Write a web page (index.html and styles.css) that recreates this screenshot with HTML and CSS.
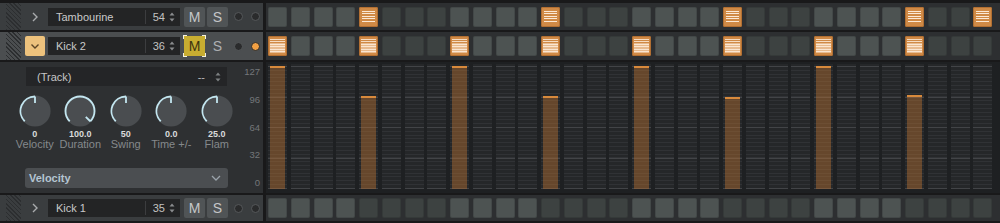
FILE: index.html
```html
<!DOCTYPE html>
<html>
<head>
<meta charset="utf-8">
<link rel="stylesheet" href="styles.css">
</head>
<body>
<div class="app">
  <div class="track">
    <div class="head">
      <div class="grip"></div>
      <div class="expander"><svg width="10" height="10" viewBox="0 0 10 10"><polyline points="3,1 7,5 3,9" fill="none" stroke="#a9abad" stroke-width="1.4"/></svg></div>
      <div class="namebox"><span class="name">Tambourine</span><span class="num">54</span><svg class="spin" width="6" height="12" viewBox="0 0 6 12"><path d="M0.5 4.5 L3 1.5 L5.5 4.5Z M0.5 7.5 L3 10.5 L5.5 7.5Z" fill="#8a8c8e"/></svg></div>
      <div class="btn">M</div>
      <div class="btn">S</div>
      <div class="dot"></div>
      <div class="dot"></div>
    </div>
    <div class="gutter"></div>
    <div class="steps">
      <div class="cell l"></div><div class="cell l"></div><div class="cell l"></div><div class="cell l"></div>
      <div class="cell on"><span class="stripes"></span></div><div class="cell d"></div><div class="cell d"></div><div class="cell d"></div>
      <div class="cell l"></div><div class="cell l"></div><div class="cell l"></div><div class="cell l"></div>
      <div class="cell on"><span class="stripes"></span></div><div class="cell d"></div><div class="cell d"></div><div class="cell d"></div>
      <div class="cell l"></div><div class="cell l"></div><div class="cell l"></div><div class="cell l"></div>
      <div class="cell on"><span class="stripes"></span></div><div class="cell d"></div><div class="cell d"></div><div class="cell d"></div>
      <div class="cell l"></div><div class="cell l"></div><div class="cell l"></div><div class="cell l"></div>
      <div class="cell on"><span class="stripes"></span></div><div class="cell d"></div><div class="cell d"></div><div class="cell on"><span class="stripes"></span></div>
    </div>
  </div>

  <div class="track sel">
    <div class="head">
      <div class="grip"></div>
      <div class="expander open"><svg width="10" height="10" viewBox="0 0 10 10"><polyline points="1.5,3.5 5,7 8.5,3.5" fill="none" stroke="#5b4526" stroke-width="1.4"/></svg></div>
      <div class="namebox"><span class="name">Kick 2</span><span class="num">36</span><svg class="spin" width="6" height="12" viewBox="0 0 6 12"><path d="M0.5 4.5 L3 1.5 L5.5 4.5Z M0.5 7.5 L3 10.5 L5.5 7.5Z" fill="#8a8c8e"/></svg></div>
      <div class="btn mute-on">M<span class="corner tl"></span><span class="corner tr"></span><span class="corner bl"></span><span class="corner br"></span></div>
      <div class="btn flat">S</div>
      <div class="dot"></div>
      <div class="dot lit"></div>
    </div>
    <div class="gutter"></div>
    <div class="steps">
      <div class="cell on"><span class="stripes k"></span></div><div class="cell l"></div><div class="cell l"></div><div class="cell l"></div>
      <div class="cell on"><span class="stripes k"></span></div><div class="cell d"></div><div class="cell d"></div><div class="cell d"></div>
      <div class="cell on"><span class="stripes k"></span></div><div class="cell l"></div><div class="cell l"></div><div class="cell l"></div>
      <div class="cell on"><span class="stripes k"></span></div><div class="cell d"></div><div class="cell d"></div><div class="cell d"></div>
      <div class="cell on"><span class="stripes k"></span></div><div class="cell l"></div><div class="cell l"></div><div class="cell l"></div>
      <div class="cell on"><span class="stripes k"></span></div><div class="cell d"></div><div class="cell d"></div><div class="cell d"></div>
      <div class="cell on"><span class="stripes k"></span></div><div class="cell l"></div><div class="cell l"></div><div class="cell l"></div>
      <div class="cell on"><span class="stripes k"></span></div><div class="cell d"></div><div class="cell d"></div><div class="cell d"></div>
    </div>
  </div>

  <div class="editor">
    <div class="panel">
      <div class="controls">
        <div class="select dark"><span class="sel-text">(Track)</span><span class="dash">--</span><svg class="spin" width="6" height="12" viewBox="0 0 6 12"><path d="M0.5 4.5 L3 1.5 L5.5 4.5Z M0.5 7.5 L3 10.5 L5.5 7.5Z" fill="#7d8082"/></svg></div>
        <div class="knobs">
          <div class="knob">
            <svg width="32" height="32" viewBox="0 0 32 32"><circle cx="16" cy="16" r="15.6" fill="#4a4d50"/><path d="M5.75 26.25 A14.5 14.5 0 0 1 16 1.5" fill="none" stroke="#c3e6f0" stroke-width="1.8"/><line x1="16" y1="1.5" x2="16" y2="8" stroke="#c3e6f0" stroke-width="1.8"/></svg>
            <span class="val">0</span><span class="lbl">Velocity</span>
          </div>
          <div class="knob">
            <svg width="32" height="32" viewBox="0 0 32 32"><circle cx="16" cy="16" r="15.6" fill="#4a4d50"/><path d="M5.75 26.25 A14.5 14.5 0 1 1 26.25 26.25" fill="none" stroke="#c3e6f0" stroke-width="1.8"/><line x1="26.25" y1="26.25" x2="21.8" y2="21.8" stroke="#c3e6f0" stroke-width="1.8"/></svg>
            <span class="val">100.0</span><span class="lbl">Duration</span>
          </div>
          <div class="knob">
            <svg width="32" height="32" viewBox="0 0 32 32"><circle cx="16" cy="16" r="15.6" fill="#4a4d50"/><path d="M5.75 26.25 A14.5 14.5 0 0 1 16 1.5" fill="none" stroke="#c3e6f0" stroke-width="1.8"/><line x1="16" y1="1.5" x2="16" y2="8" stroke="#c3e6f0" stroke-width="1.8"/></svg>
            <span class="val">50</span><span class="lbl">Swing</span>
          </div>
          <div class="knob">
            <svg width="32" height="32" viewBox="0 0 32 32"><circle cx="16" cy="16" r="15.6" fill="#4a4d50"/><path d="M5.75 26.25 A14.5 14.5 0 0 1 16 1.5" fill="none" stroke="#c3e6f0" stroke-width="1.8"/><line x1="16" y1="1.5" x2="16" y2="8" stroke="#c3e6f0" stroke-width="1.8"/></svg>
            <span class="val">0.0</span><span class="lbl">Time +/-</span>
          </div>
          <div class="knob">
            <svg width="32" height="32" viewBox="0 0 32 32"><circle cx="16" cy="16" r="15.6" fill="#4a4d50"/><path d="M5.75 26.25 A14.5 14.5 0 0 1 16 1.5" fill="none" stroke="#c3e6f0" stroke-width="1.8"/><line x1="16" y1="1.5" x2="16" y2="8" stroke="#c3e6f0" stroke-width="1.8"/></svg>
            <span class="val">25.0</span><span class="lbl">Flam</span>
          </div>
        </div>
        <div class="select light"><span class="sel-text">Velocity</span><svg class="chev" width="10" height="8" viewBox="0 0 10 8"><polyline points="1,2 5,6 9,2" fill="none" stroke="#9aa3aa" stroke-width="1.3"/></svg></div>
      </div>
      <div class="axis"><span>127</span><span>96</span><span>64</span><span>32</span><span>0</span></div>
    </div>
    <div class="gutter"></div>
    <div class="lane">
      <div class="col"><div class="bar" style="height:100%"></div></div><div class="col"></div><div class="col"></div><div class="col"></div>
      <div class="col"><div class="bar" style="height:75.6%"></div></div><div class="col"></div><div class="col"></div><div class="col"></div>
      <div class="col"><div class="bar" style="height:100%"></div></div><div class="col"></div><div class="col"></div><div class="col"></div>
      <div class="col"><div class="bar" style="height:75.6%"></div></div><div class="col"></div><div class="col"></div><div class="col"></div>
      <div class="col"><div class="bar" style="height:100%"></div></div><div class="col"></div><div class="col"></div><div class="col"></div>
      <div class="col"><div class="bar" style="height:74.8%"></div></div><div class="col"></div><div class="col"></div><div class="col"></div>
      <div class="col"><div class="bar" style="height:100%"></div></div><div class="col"></div><div class="col"></div><div class="col"></div>
      <div class="col"><div class="bar" style="height:76.4%"></div></div><div class="col"></div><div class="col"></div><div class="col"></div>
    </div>
  </div>

  <div class="track last">
    <div class="head">
      <div class="grip"></div>
      <div class="expander"><svg width="10" height="10" viewBox="0 0 10 10"><polyline points="3,1 7,5 3,9" fill="none" stroke="#a9abad" stroke-width="1.4"/></svg></div>
      <div class="namebox"><span class="name">Kick 1</span><span class="num">35</span><svg class="spin" width="6" height="12" viewBox="0 0 6 12"><path d="M0.5 4.5 L3 1.5 L5.5 4.5Z M0.5 7.5 L3 10.5 L5.5 7.5Z" fill="#8a8c8e"/></svg></div>
      <div class="btn">M</div>
      <div class="btn">S</div>
      <div class="dot"></div>
      <div class="dot"></div>
    </div>
    <div class="gutter"></div>
    <div class="steps">
      <div class="cell l"></div><div class="cell l"></div><div class="cell l"></div><div class="cell l"></div>
      <div class="cell d"></div><div class="cell d"></div><div class="cell d"></div><div class="cell d"></div>
      <div class="cell l"></div><div class="cell l"></div><div class="cell l"></div><div class="cell l"></div>
      <div class="cell d"></div><div class="cell d"></div><div class="cell d"></div><div class="cell d"></div>
      <div class="cell l"></div><div class="cell l"></div><div class="cell l"></div><div class="cell l"></div>
      <div class="cell d"></div><div class="cell d"></div><div class="cell d"></div><div class="cell d"></div>
      <div class="cell l"></div><div class="cell l"></div><div class="cell l"></div><div class="cell l"></div>
      <div class="cell d"></div><div class="cell d"></div><div class="cell d"></div><div class="cell d"></div>
    </div>
  </div>
</div>
</body>
</html>
```

FILE: styles.css
```css
html, body {
  margin: 0;
  padding: 0;
}
body {
  width: 1000px;
  height: 223px;
  overflow: hidden;
  background: #19191a;
  font-family: "Liberation Sans", Arial, sans-serif;
  color: #c8c8c8;
}
.app {
  display: flex;
  flex-direction: column;
  gap: 2px;
  padding-top: 3px;
}
.track {
  display: flex;
  height: 27px;
}
.track.sel {
  height: 28px;
}
.track.last {
  height: 26px;
}
.head {
  width: 263px;
  flex: none;
  display: flex;
  align-items: center;
  background: #3a3d3f;
}
.track.sel .head {
  background: #4b4e50;
}
.gutter {
  width: 3px;
  flex: none;
  background: #19191a;
}
.grip {
  width: 15px;
  height: 100%;
  margin-left: 6px;
  background: repeating-linear-gradient(45deg, #2c2e30 0 1px, transparent 1px 3px);
}
.expander {
  width: 20px;
  height: 20px;
  margin-left: 4px;
  display: flex;
  align-items: center;
  justify-content: center;
  border-radius: 2px;
}
.expander.open {
  background: #edc27d;
}
.namebox {
  width: 132px;
  height: 18px;
  margin-left: 3px;
  background: #232425;
  display: flex;
  align-items: center;
  font-size: 11px;
  color: #c9c9c9;
}
.name {
  flex: 1;
  padding-left: 8px;
}
.num {
  width: 19px;
  height: 14px;
  line-height: 14px;
  border-left: 1px solid #3c3d3f;
  text-align: right;
  color: #c2c2c2;
}
.namebox .spin {
  margin: 0 5px 0 4px;
}
.btn {
  width: 21px;
  height: 20px;
  margin-left: 4px;
  display: flex;
  align-items: center;
  justify-content: center;
  background: #505456;
  border-radius: 2px;
  font-size: 14px;
  color: #c4c6c8;
  position: relative;
}
.btn + .btn {
  margin-left: 2px;
}
.btn.flat {
  background: transparent;
  color: #aeb0b2;
}
.btn.mute-on {
  background: #c8ad31;
  color: #3c3410;
  border-radius: 0;
}
.corner {
  position: absolute;
  width: 3px;
  height: 3px;
  border-color: #f4f1e2;
  border-style: solid;
  border-width: 0;
}
.corner.tl { left: -1px; top: -1px; border-top-width: 1px; border-left-width: 1px; }
.corner.tr { right: -1px; top: -1px; border-top-width: 1px; border-right-width: 1px; }
.corner.bl { left: -1px; bottom: -1px; border-bottom-width: 1px; border-left-width: 1px; }
.corner.br { right: -1px; bottom: -1px; border-bottom-width: 1px; border-right-width: 1px; }
.dot {
  width: 7px;
  height: 7px;
  border-radius: 50%;
  background: #2a2b2c;
  border: 1px solid #55585a;
  margin-left: 6px;
}
.dot + .dot {
  margin-left: 8px;
}
.dot.lit {
  background: #f2a043;
  border-color: #2a2b2c;
}
.steps {
  flex: 1;
  background: #2d2f31;
  display: grid;
  grid-template-columns: repeat(32, 19px);
  column-gap: 3.75px;
  padding-left: 2px;
  align-items: center;
}
.cell {
  height: 20px;
  border-radius: 2px;
  box-sizing: border-box;
  box-shadow: inset 0 0 0 1px rgba(0, 0, 0, 0.12);
}
.cell.l {
  background: #4d5352;
}
.cell.d {
  background: #3d4241;
}
.cell.on {
  background: #d08a46;
  box-shadow: inset 0 0 0 1px #b26f32;
  display: flex;
  align-items: center;
  justify-content: center;
}
.stripes {
  width: 13px;
  height: 12px;
  background: repeating-linear-gradient(to bottom, #fbe8d4 0 1px, transparent 1px 2.4px);
}
.stripes.k {
  width: 15px;
  height: 14px;
  background:
    repeating-linear-gradient(to bottom, rgba(255, 240, 225, 0.8) 0 1px, transparent 1px 2.4px),
    linear-gradient(to bottom, transparent 28%, rgba(255, 235, 215, 0.5) 28%);
}
.editor {
  display: flex;
  height: 131px;
}
.panel {
  width: 263px;
  flex: none;
  background: #2e3032;
  display: flex;
}
.controls {
  width: 240px;
  display: flex;
  flex-direction: column;
}
.select {
  display: flex;
  align-items: center;
  font-size: 11px;
  box-sizing: border-box;
}
.select.dark {
  margin: 5px 0 0 26px;
  width: 201px;
  height: 19px;
  background: #242527;
  color: #c6c6c6;
  padding-left: 11px;
}
.select .sel-text {
  flex: 1;
}
.dash {
  color: #b8b8b8;
  margin-right: 10px;
}
.select.dark .spin {
  margin-right: 6px;
}
.knobs {
  margin: 9px 0 0 12px;
  display: grid;
  grid-template-columns: repeat(5, 45.5px);
}
.knob {
  display: flex;
  flex-direction: column;
  align-items: center;
}
.knob svg {
  display: block;
}
.val {
  margin-top: 3px;
  font-size: 9px;
  line-height: 9px;
  font-weight: bold;
  color: #d9dadb;
}
.lbl {
  font-size: 11px;
  line-height: 11px;
  color: #85898c;
}
.select.light {
  margin: 18px 0 0 25px;
  width: 203px;
  height: 20px;
  background: #4b4e51;
  border-radius: 3px;
  padding: 0 7px 0 4px;
  font-weight: bold;
  color: #b4c5d2;
}
.axis {
  flex: 1;
  display: flex;
  flex-direction: column;
  justify-content: space-between;
  align-items: flex-end;
  padding: 4px 3px 4px 0;
  font-size: 9.5px;
  line-height: 12px;
  color: #74777a;
}
.lane {
  flex: 1;
  background: #1e2022;
  display: grid;
  grid-template-columns: repeat(32, 19px);
  column-gap: 3.75px;
  padding: 2px 0 4px 2px;
}
.col {
  box-sizing: border-box;
  padding-top: 2px;
  display: flex;
  align-items: flex-end;
  justify-content: center;
  background:
    repeating-linear-gradient(to bottom, #424447 0 1px, transparent 1px 30.5px),
    repeating-linear-gradient(to bottom, #303235 0 1px, transparent 1px 3.81px),
    #252729;
  background-position: 0 2px, 0 2px, 0 0;
}
.bar {
  width: 15px;
  box-sizing: border-box;
  background: rgba(200, 120, 50, 0.4);
  border-top: 2px solid #d88a3c;
}
```
